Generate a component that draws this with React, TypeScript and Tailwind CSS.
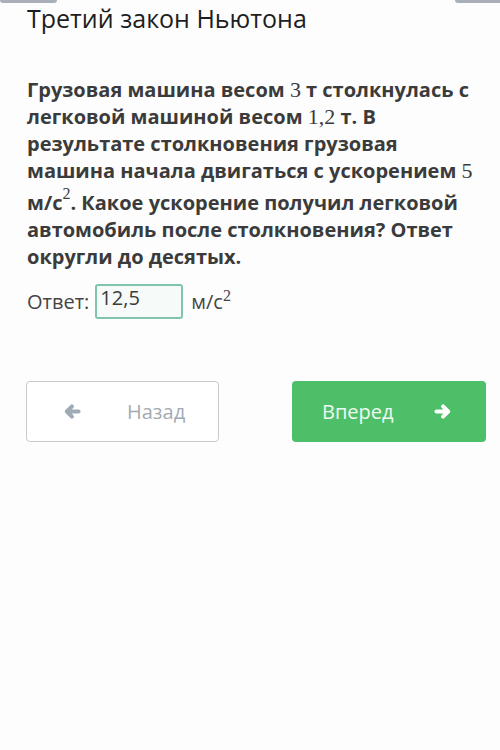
const Num = ({ children }: { children: React.ReactNode }) => (
    <span className="font-normal font-['Liberation_Serif','DejaVu_Serif',serif] text-[22px]">{children}</span>
);

const Arrow = ({ dir, className }: { dir: "left" | "right"; className?: string }) => (
    <svg viewBox="0 0 20 18" className={className} style={dir === "left" ? { transform: "scaleX(-1)" } : undefined}>
        <path
            d="M2.5 9h12 M9.5 3.5 L15 9 L9.5 14.5"
            fill="none"
            stroke="currentColor"
            strokeWidth="4.2"
            strokeLinecap="round"
            strokeLinejoin="round"
        />
    </svg>
);

export default function App() {
    return (
        <div className="relative w-[500px] h-[750px] bg-[#fdfdfd] overflow-hidden font-['Open_Sans',sans-serif]">
            {/* top tab edges */}
            <div className="absolute left-0 top-0 w-[57px] h-[3px] rounded-b bg-[#a9b0b8]"></div>
            <div className="absolute right-0 top-0 w-[45px] h-[3px] rounded-bl bg-[#a9b0b8]"></div>

            <div className="pl-[27px] pr-[14px]">
                <h1 className="pt-[2px] text-[25px] leading-[32px] text-[#1e1e1e] font-normal">Третий закон Ньютона</h1>

                <p className="mt-[42px] text-[20px] leading-[27px] font-bold text-[#3b3b3b] pr-[10px]">
                    Грузовая машина весом <Num>3</Num> т столкнулась с легковой машиной весом <Num>1,2</Num> т. В результате
                    столкновения грузовая машина начала двигаться с ускорением <Num>5</Num> м/с
                    <span className="inline-block align-[11px] leading-[20px] font-normal font-['Liberation_Serif','DejaVu_Serif',serif] text-[16px]">
                        2
                    </span>
                    . Какое ускорение получил легковой автомобиль после столкновения? Ответ округли до десятых.
                </p>

                <div className="mt-[14px] flex items-center gap-[6px] text-[20px] text-[#454545]">
                    <span>Ответ:</span>
                    <div className="w-[88px] h-[35px] rounded-[3px] border-2 border-[#7fc4ac] bg-[#f6fbf9] px-[3px] leading-[24px] text-[#3b3b3b]">
                        12,5
                    </div>
                    <span className="ml-[2px]">
                        м/с<sup className="font-['Liberation_Serif','DejaVu_Serif',serif] text-[16px]">2</sup>
                    </span>
                </div>

                <div className="mt-[62px] flex justify-between -ml-[1px]">
                    <button className="w-[193px] h-[61px] rounded-[4px] border border-[#c8cbce] bg-white flex items-center pl-[35px] text-[20px] text-[#a3abb2]">
                        <Arrow dir="left" className="w-[19px] h-[17px] text-[#9eaab5]" />
                        <span className="ml-[46px]">Назад</span>
                    </button>
                    <button className="w-[194px] h-[61px] rounded-[4px] bg-[#4dbf69] flex items-center pl-[30px] text-[20px] text-[#eef9f0]">
                        <span>Вперед</span>
                        <Arrow dir="right" className="ml-[40px] w-[19px] h-[17px] text-white" />
                    </button>
                </div>
            </div>
        </div>
    );
}
